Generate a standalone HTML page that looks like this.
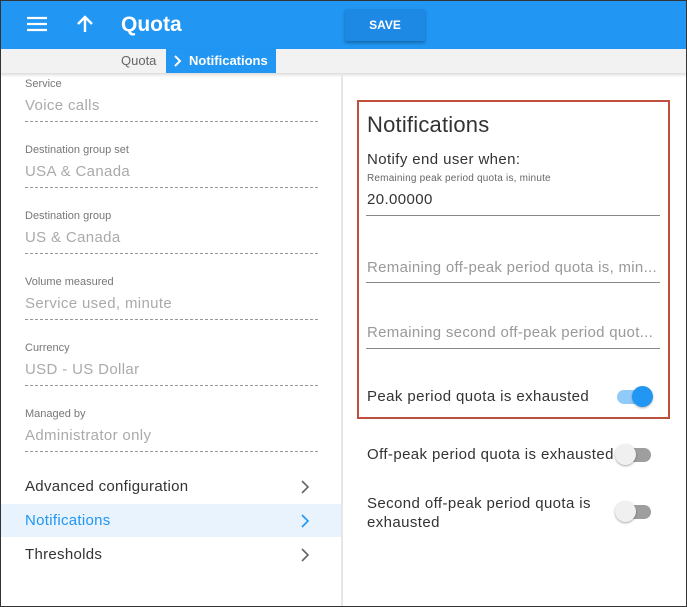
<!DOCTYPE html>
<html><head><style>
*{margin:0;padding:0;box-sizing:border-box}
body{width:687px;height:607px;font-family:"Liberation Sans",sans-serif;background:#fff;position:relative;overflow:hidden}
.frame{position:absolute;left:0;top:0;width:687px;height:607px;border:1px solid #333;pointer-events:none;z-index:10}
.hdr{position:absolute;left:0;top:0;width:687px;height:49px;background:#2196f3}
.bc{position:absolute;left:0;top:49px;width:687px;height:24px;background:#f2f2f2;box-shadow:0 2px 3px rgba(0,0,0,.15)}
.a{position:absolute;white-space:nowrap}
.lbl{font-size:11px;color:#777}
.val{font-size:15px;color:#aaa;letter-spacing:.35px}
.line{position:absolute;left:25px;width:293px;border-top:1px dashed #999}
.menu{position:absolute;left:0;width:341px;height:33px;font-size:15px;color:#333;letter-spacing:.3px}
.menu span{position:absolute;left:25px;top:8px}
.chev{position:absolute;left:300px;top:10px}
.rt{font-size:15px;color:#333;letter-spacing:.4px}
.ul{position:absolute;left:366px;width:294px;border-top:1px solid #888}
</style></head><body>
<div class="hdr"></div>
<svg class="a" style="left:27px;top:16px" width="20" height="16"><path d="M0 2h20M0 8h20M0 14h20" stroke="#fff" stroke-width="2.2"/></svg>
<svg class="a" style="left:76px;top:15px" width="18" height="18"><path d="M9 17V2M2 9l7-7 7 7" stroke="#fff" stroke-width="2.4" fill="none"/></svg>
<div class="a" style="left:121px;top:13px;font-size:21px;font-weight:bold;color:#fff">Quota</div>
<div class="a" style="left:345px;top:9px;width:80px;height:32px;background:#1e88e5;box-shadow:0 2px 3px rgba(0,0,0,.3);border-radius:2px;color:#fff;font-size:12px;font-weight:bold;text-align:center;line-height:32px">SAVE</div>
<div class="bc"></div>
<div class="a" style="left:121px;top:53px;font-size:13px;color:#666">Quota</div>
<div class="a" style="left:166px;top:49px;width:110px;height:24px;background:#2196f3"></div>
<svg class="a" style="left:173px;top:55px" width="10" height="12"><path d="M2 1l5 5-5 5" stroke="#fff" stroke-width="2" fill="none"/></svg>
<div class="a" style="left:189px;top:53px;font-size:13px;color:#fff;font-weight:bold">Notifications</div>
<div class="a" style="left:341px;top:73px;width:2px;height:534px;background:#e6e6e6"></div>

<div class="a lbl" style="left:25px;top:78px">Service</div><div class="a val" style="left:25px;top:97px">Voice calls</div><div class="line" style="top:121px"></div>
<div class="a lbl" style="left:25px;top:144px">Destination group set</div><div class="a val" style="left:25px;top:163px">USA &amp; Canada</div><div class="line" style="top:187px"></div>
<div class="a lbl" style="left:25px;top:210px">Destination group</div><div class="a val" style="left:25px;top:229px">US &amp; Canada</div><div class="line" style="top:253px"></div>
<div class="a lbl" style="left:25px;top:276px">Volume measured</div><div class="a val" style="left:25px;top:295px">Service used, minute</div><div class="line" style="top:319px"></div>
<div class="a lbl" style="left:25px;top:342px">Currency</div><div class="a val" style="left:25px;top:361px">USD - US Dollar</div><div class="line" style="top:385px"></div>
<div class="a lbl" style="left:25px;top:408px">Managed by</div><div class="a val" style="left:25px;top:427px">Administrator only</div><div class="line" style="top:451px"></div>

<div class="menu" style="top:470px"><span>Advanced configuration</span><svg class="chev" width="10" height="14"><path d="M2 1l6 6-6 6" stroke="#666" stroke-width="1.6" fill="none"/></svg></div>
<div class="menu" style="top:504px;background:#e8f3fd;color:#2196f3"><span>Notifications</span><svg class="chev" width="10" height="14"><path d="M2 1l6 6-6 6" stroke="#2196f3" stroke-width="1.6" fill="none"/></svg></div>
<div class="menu" style="top:538px"><span>Thresholds</span><svg class="chev" width="10" height="14"><path d="M2 1l6 6-6 6" stroke="#666" stroke-width="1.6" fill="none"/></svg></div>

<div class="a" style="left:357px;top:100px;width:313px;height:319px;border:2px solid #c0503e"></div>
<div class="a" style="left:367px;top:112px;font-size:22px;color:#333;letter-spacing:.2px">Notifications</div>
<div class="a rt" style="left:367px;top:151px">Notify end user when:</div>
<div class="a" style="left:367px;top:173px;font-size:10px;color:#666;letter-spacing:.2px">Remaining peak period quota is, minute</div>
<div class="a rt" style="left:367px;top:191px">20.00000</div><div class="ul" style="top:215px"></div>
<div class="a" style="left:367px;top:259px;font-size:15px;color:#999;letter-spacing:.3px;width:293px;overflow:hidden">Remaining off-peak period quota is, min...</div><div class="ul" style="top:282px"></div>
<div class="a" style="left:367px;top:324px;font-size:15px;color:#999;letter-spacing:.3px;width:293px;overflow:hidden">Remaining second off-peak period quot...</div><div class="ul" style="top:348px"></div>
<div class="a rt" style="left:367px;top:388px">Peak period quota is exhausted</div>
<div class="a" style="left:617px;top:390px;width:34px;height:14px;border-radius:7px;background:#90caf9"></div>
<div class="a" style="left:632px;top:386px;width:21px;height:21px;border-radius:50%;background:#2196f3;box-shadow:0 1px 2px rgba(0,0,0,.3)"></div>
<div class="a rt" style="left:367px;top:446px">Off-peak period quota is exhausted</div>
<div class="a" style="left:617px;top:448px;width:34px;height:14px;border-radius:7px;background:#9e9e9e"></div>
<div class="a" style="left:615px;top:444px;width:21px;height:21px;border-radius:50%;background:#f0f0f0;box-shadow:0 1px 2px rgba(0,0,0,.35)"></div>
<div class="a rt" style="left:367px;top:494px;line-height:19px">Second off-peak period quota is<br>exhausted</div>
<div class="a" style="left:617px;top:505px;width:34px;height:14px;border-radius:7px;background:#9e9e9e"></div>
<div class="a" style="left:615px;top:501px;width:21px;height:21px;border-radius:50%;background:#f0f0f0;box-shadow:0 1px 2px rgba(0,0,0,.35)"></div>
<div class="frame"></div>
</body></html>
